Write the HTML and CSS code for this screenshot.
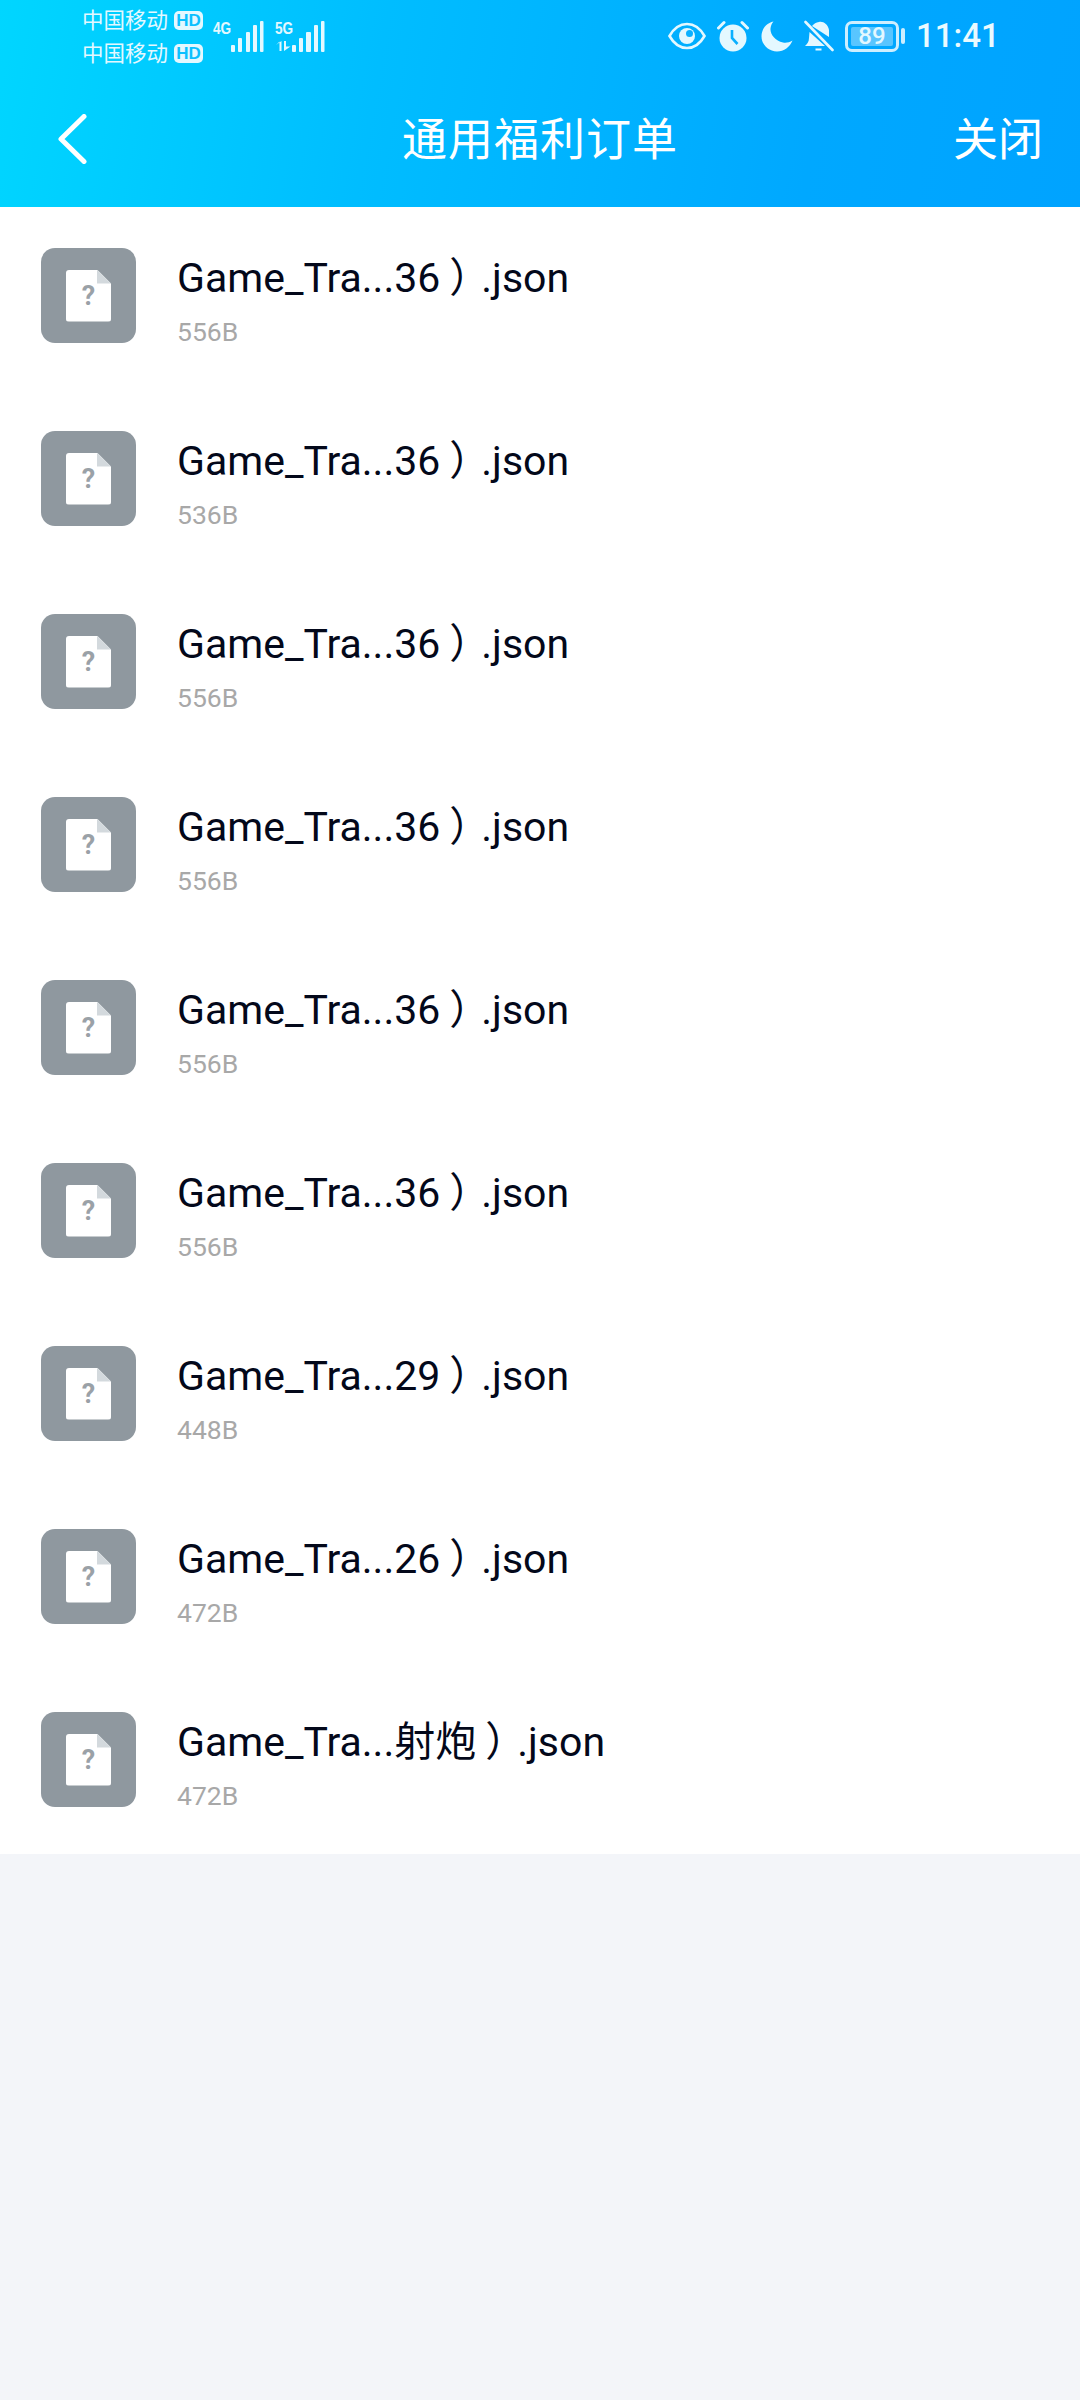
FILE: index.html
```html
<!DOCTYPE html>
<html lang="zh">
<head>
<meta charset="utf-8">
<title>通用福利订单</title>
<link rel="stylesheet" href="styles.css">
</head>
<body>
<header class="header">
  <div class="status">
    <div class="carriers">
      <div class="carrier"><span>中国移动</span><b class="hd">HD</b></div>
      <div class="carrier"><span>中国移动</span><b class="hd">HD</b></div>
    </div>
    <div class="signal sig-a">
      <span class="net">4G</span>
      <svg class="bars" width="33" height="31" viewBox="0 0 33 31"><g fill="#e4f8ff"><rect x="0" y="24" width="4" height="7" rx="1"/><rect x="7" y="17" width="4" height="14" rx="1"/><rect x="15" y="11" width="4" height="20" rx="1"/><rect x="22" y="4" width="4" height="27" rx="1"/><rect x="29" y="0" width="3.5" height="31" rx="1"/></g></svg>
    </div>
    <div class="signal sig-b">
      <div class="net-stack">
        <span class="net">5G</span>
        <svg class="arrows" width="17" height="10" viewBox="0 0 17 10"><path d="M1 4 4.500 0.500V10H6.500V0L1 4ZM9 0H11V5.500L15.500 5.500 9 10Z" fill="#e4f8ff"/></svg>
      </div>
      <svg class="bars" width="33" height="31" viewBox="0 0 33 31"><g fill="#e4f8ff"><rect x="0" y="24" width="4" height="7" rx="1"/><rect x="7" y="17" width="4" height="14" rx="1"/><rect x="14" y="11" width="5" height="20" rx="1"/><rect x="22" y="4" width="4" height="27" rx="1"/><rect x="29" y="0" width="3.500" height="31" rx="1"/></g></svg>
    </div>
    <div class="sys">
      <svg class="ic-eye" width="38" height="28" viewBox="0 0 38 28"><path d="M1.500 14C6 6 12 2 19 2s13 4 17.500 12C32 22 26 26 19 26S6 22 1.500 14Z" fill="none" stroke="#e4f8ff" stroke-width="2.600"/><circle cx="19" cy="14" r="8" fill="#e4f8ff"/><circle cx="21.500" cy="11.500" r="3.500" fill="#0bb0ff"/></svg>
      <svg class="ic-alarm" width="32" height="32" viewBox="0 0 32 32"><circle cx="16" cy="18" r="13.500" fill="#e4f8ff"/><path d="M1.500 8 7 2.500M30.500 8 25 2.500" stroke="#e4f8ff" stroke-width="3" stroke-linecap="round"/><path d="M15 10V18L20.500 24" fill="none" stroke="#0bb0ff" stroke-width="2.600"/></svg>
      <svg class="ic-moon" width="32" height="31" viewBox="0 0 32 31"><path d="M12.500 0.500C5.500 2 0.500 8 0.500 15.200 0.500 23.700 7.500 30.500 16 30.500 23 30.500 29 26 31.500 19.500 28.500 21.500 25 22 22 21.500 14 20 9 13 9.500 7.500 9.700 5 10.800 2.500 12.500 0.500Z" fill="#e4f8ff"/></svg>
      <svg class="ic-bell" width="30" height="32" viewBox="0 0 30 32"><path d="M8 6C10 3.500 12 2.500 15 2 19 1 24 4 25 10V17L8 6ZM5.500 12 21 26H1C3 24 5 22 5 18Z" fill="#e4f8ff"/><path d="M1.500 2 28.500 30" stroke="#e4f8ff" stroke-width="2.600" stroke-linecap="round"/><path d="M11.500 28.500H17.500V30.500H11.500Z" fill="#e4f8ff"/></svg>
      <div class="battery"><span class="level">89</span></div>
      <i class="battery-tab"></i>
      <time class="clock">11:41</time>
    </div>
  </div>
  <nav class="nav">
    <svg class="back" width="29" height="50" viewBox="0 0 29 50"><path d="M26 2.500 3 25 26 47.500" fill="none" stroke="#fff" stroke-width="5" stroke-linecap="round" stroke-linejoin="round"/></svg>
    <h1 class="title">通用福利订单</h1>
    <a class="close">关闭</a>
  </nav>
</header>
<main class="list">
  <div class="row"><div class="thumb"><div class="doc"><span>?</span></div></div><div class="meta"><div class="name">Game_Tra...36<span class="paren">）</span>.json</div><div class="size">556B</div></div></div>
  <div class="row"><div class="thumb"><div class="doc"><span>?</span></div></div><div class="meta"><div class="name">Game_Tra...36<span class="paren">）</span>.json</div><div class="size">536B</div></div></div>
  <div class="row"><div class="thumb"><div class="doc"><span>?</span></div></div><div class="meta"><div class="name">Game_Tra...36<span class="paren">）</span>.json</div><div class="size">556B</div></div></div>
  <div class="row"><div class="thumb"><div class="doc"><span>?</span></div></div><div class="meta"><div class="name">Game_Tra...36<span class="paren">）</span>.json</div><div class="size">556B</div></div></div>
  <div class="row"><div class="thumb"><div class="doc"><span>?</span></div></div><div class="meta"><div class="name">Game_Tra...36<span class="paren">）</span>.json</div><div class="size">556B</div></div></div>
  <div class="row"><div class="thumb"><div class="doc"><span>?</span></div></div><div class="meta"><div class="name">Game_Tra...36<span class="paren">）</span>.json</div><div class="size">556B</div></div></div>
  <div class="row"><div class="thumb"><div class="doc"><span>?</span></div></div><div class="meta"><div class="name">Game_Tra...29<span class="paren">）</span>.json</div><div class="size">448B</div></div></div>
  <div class="row"><div class="thumb"><div class="doc"><span>?</span></div></div><div class="meta"><div class="name">Game_Tra...26<span class="paren">）</span>.json</div><div class="size">472B</div></div></div>
  <div class="row"><div class="thumb"><div class="doc"><span>?</span></div></div><div class="meta"><div class="name">Game_Tra...射炮<span class="paren">）</span>.json</div><div class="size">472B</div></div></div>
</main>
</body>
</html>
```
FILE: styles.css
```css
* { box-sizing: border-box; }
html, body { margin: 0; padding: 0; }
body {
  width: 1080px;
  height: 2400px;
  background: #f3f5f9;
  font-family: Roboto, "Noto Sans CJK SC", sans-serif;
  overflow: hidden;
}
.header {
  height: 207px;
  background: linear-gradient(100deg, #00d6ff 0%, #00bdff 35%, #00a8ff 75%, #00a3ff 100%);
  color: #fff;
}
.status {
  height: 70px;
  display: flex;
  align-items: flex-start;
  padding-left: 82px;
  color: #e4f8ff;
}
.carriers { display: flex; flex-direction: column; padding-top: 4px; width: 131px; }
.carrier {
  display: flex;
  align-items: center;
  gap: 6px;
  height: 33px;
  font-size: 21.500px;
  line-height: 33px;
}
.hd {
  width: 29px;
  height: 19px;
  border-radius: 5px;
  background: #e4f8ff;
  color: #0bc0ff;
  font: 700 17px/19px "Liberation Sans", sans-serif;
  text-align: center;
}
.signal { display: flex; align-items: flex-start; padding-top: 21px; }
.sig-a { width: 62px; }
.net {
  display: block;
  width: 18px;
  font: 700 17px/15px "Liberation Sans", sans-serif;
  transform: scaleX(0.8);
  transform-origin: left center;
}
.net-stack { width: 17px; display: flex; flex-direction: column; gap: 5px; }
.arrows { display: block; }
.sys {
  margin-left: 343px;
  display: flex;
  align-items: center;
  height: 30px;
  margin-top: 21px;
}
.ic-eye { margin-right: 11px; }
.ic-alarm { margin-right: 12px; }
.ic-moon { margin-right: 11px; }
.ic-bell { margin-right: 11px; }
.battery {
  width: 54px;
  height: 31px;
  border: 3px solid #cdeeff;
  border-radius: 7px;
  padding: 3px;
}
.level {
  display: block;
  width: 42px;
  height: 19px;
  border-radius: 2px;
  background: rgba(255, 255, 255, 0.35);
  color: #e4f8ff;
  font-size: 24px;
  font-weight: 500;
  line-height: 19px;
  text-align: center;
}
.battery-tab {
  width: 4px;
  height: 16px;
  margin-left: 2px;
  border-radius: 2px;
  background: #cdeeff;
}
.clock {
  margin-left: 11px;
  font-size: 33px;
  font-weight: 500;
  line-height: 30px;
  color: #eafaff;
}
.nav {
  height: 137px;
  display: grid;
  grid-template-columns: 1fr auto 1fr;
  align-items: center;
  padding: 4px 37px 0;
}
.back { display: block; margin: -4px 0 0 21px; }
.title {
  margin: 0;
  font-size: 45px;
  font-weight: 400;
  letter-spacing: 1px;
  line-height: 60px;
}
.close {
  justify-self: end;
  font-size: 45px;
  line-height: 60px;
}
.list { background: #fff; }
.row {
  height: 183px;
  display: flex;
  align-items: flex-start;
  padding: 41px 0 0 41px;
  gap: 41px;
}
.thumb {
  width: 95px;
  height: 95px;
  border-radius: 14px;
  background: #8f989f;
  display: flex;
  align-items: center;
  justify-content: center;
}
.doc {
  position: relative;
  width: 45px;
  height: 52px;
  background: #fff;
  border-radius: 3px;
  clip-path: polygon(0 0, 31px 0, 100% 14px, 100% 100%, 0 100%);
  display: flex;
  align-items: center;
  justify-content: center;
}
.doc::after {
  content: "";
  position: absolute;
  top: 0;
  right: 0;
  width: 14px;
  height: 14px;
  background: #d3d9dd;
  clip-path: polygon(0 0, 100% 100%, 0 100%);
}
.doc span {
  color: #9aa1a7;
  font: 700 27px/30px Roboto, sans-serif;
}
.meta { display: flex; flex-direction: column; margin-top: 5px; }
.name {
  color: #03081a;
  font-size: 41px;
  line-height: 50px;
}
.paren {
  display: inline-block;
  font-feature-settings: "halt";
  width: 20.500px;
  margin: 0 11.500px 0 9px;
}
.size {
  margin-top: 13px;
  color: #a8a8a8;
  font-size: 26.500px;
  line-height: 32px;
}
```
